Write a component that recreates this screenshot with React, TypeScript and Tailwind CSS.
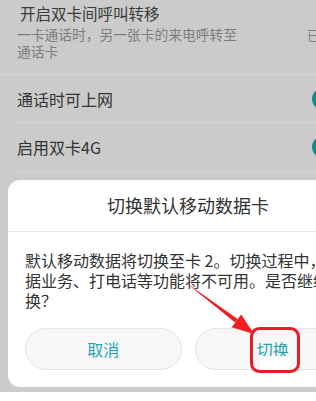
import React from "react";

export default function App() {
  return (
    <div
      className="relative w-[316px] h-[401px] overflow-hidden bg-white"
      style={{ fontFamily: '"Noto Sans CJK SC", "Noto Sans", sans-serif' }}
    >
      <div className="h-[392px] bg-[#cbcbcb] overflow-hidden">
        {/* row 1 */}
        <div className="flex pl-[17px] pt-[2px] pb-[14px] border-b border-[#d6d6d6]">
          <div className="w-[290px] shrink-0">
            <div className="text-[15.5px] leading-[22px] text-[#3a3a3a] pl-[3px]">开启双卡间呼叫转移</div>
            <div className="text-[13.75px] leading-[17px] text-[#7d7d7d] mt-[2px]">
              一卡通话时，另一张卡的来电呼转至
              <br />
              通话卡
            </div>
          </div>
          <div className="shrink-0 whitespace-nowrap text-[13px] leading-[17px] text-[#7d7d7d] mt-[24px]">已开启</div>
        </div>
        {/* row 2 */}
        <div className="flex items-center justify-between h-[48px] ml-[17px] border-b border-[#d6d6d6]">
          <div className="text-[16px] text-[#333333]">通话时可上网</div>
          <div className="w-[22px] h-[22px] rounded-full bg-[#138b8f] mr-[-18px] shrink-0"></div>
        </div>
        {/* row 3 */}
        <div className="flex items-center justify-between h-[49px] ml-[17px] border-b border-[#d6d6d6]">
          <div className="text-[16px] text-[#333333]">启用双卡4G</div>
          <div className="w-[22px] h-[22px] rounded-full bg-[#138b8f] mr-[-18px] shrink-0"></div>
        </div>

        {/* dialog */}
        <div className="ml-[8px] mt-[8px] w-[360px] h-[207px] bg-white rounded-[12px]">
          <div className="h-[52px] flex items-center justify-center border-b border-[#e6e6e6] text-[18px] text-[#333333]">
            切换默认移动数据卡
          </div>
          <div className="px-[17px] pt-[18px] text-[16px] leading-[20px] text-[#333333] whitespace-nowrap">
            <div>默认移动数据将切换至卡 2。切换过程中，数</div>
            <div>据业务、打电话等功能将不可用。是否继续切</div>
            <div>换？</div>
          </div>
          <div className="flex gap-[13px] px-[17px] mt-[18px]">
            <div className="w-[157px] h-[42px] rounded-full bg-[#f7f7f7] border border-[#e4e4e4] flex items-center justify-center text-[16px] text-[#1fa3b3]">
              取消
            </div>
            <div className="w-[157px] h-[42px] rounded-full bg-[#f7f7f7] border border-[#e4e4e4] flex items-center justify-center text-[16px] text-[#1fa3b3]">
              切换
            </div>
          </div>
        </div>
      </div>

      {/* annotation overlay */}
      <svg className="absolute left-0 top-0" width="316" height="401" viewBox="0 0 316 401">
        <rect x="260" y="356" width="30" height="14" fill="#ffffff" />
        <rect x="251.5" y="328.5" width="47" height="43" rx="8" ry="8" fill="none" stroke="#e81c24" strokeWidth="3" />
        <polygon points="185,282 235.2,322.6 237.6,319.0" fill="#f01c22" />
        <polygon points="254,334 231.6,327.2 241.2,314.4" fill="#f01c22" />
      </svg>
    </div>
  );
}
